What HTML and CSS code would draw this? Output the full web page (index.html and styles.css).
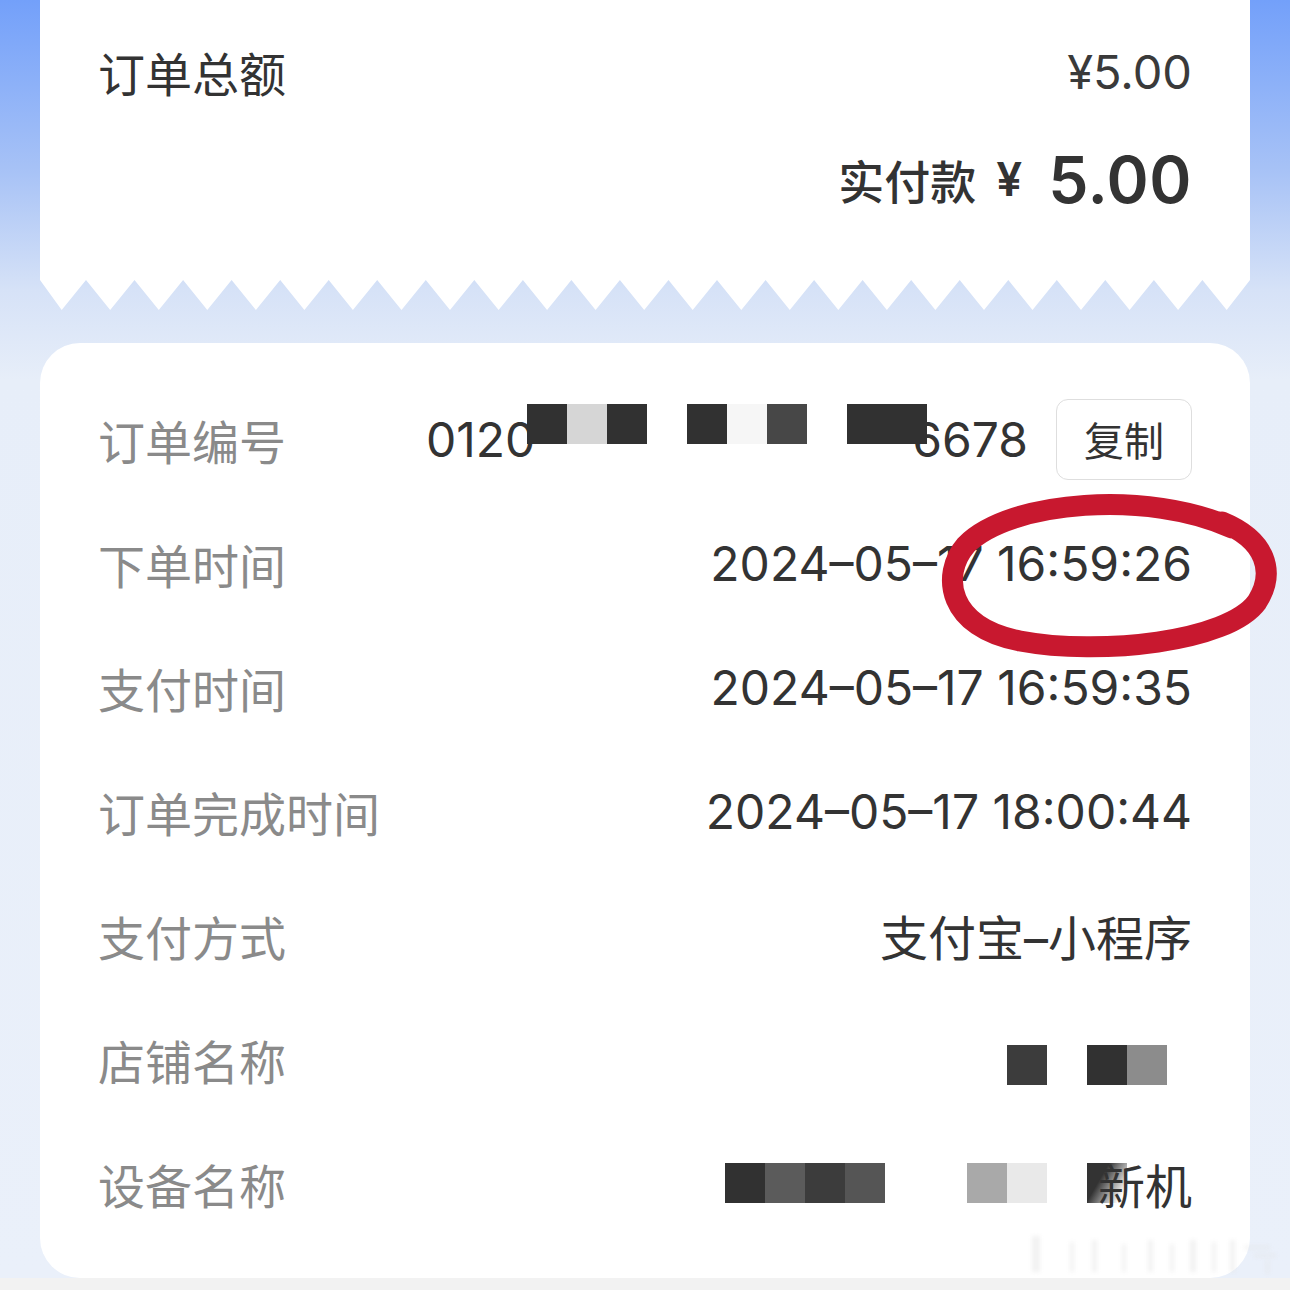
FILE: index.html
```html
<!DOCTYPE html>
<html lang="zh-CN">
<head>
  <meta charset="UTF-8" />
  <meta name="viewport" content="width=device-width, initial-scale=1.0"/>
  <title>订单详情</title>
  <link rel="stylesheet" href="styles.css">
</head>
<body>
  <div class="page">
    <div class="bill">
      <div class="bill-body">
        <div class="bill-row">
          <span class="bill-title">订单总额</span>
          <span class="bill-total">¥5.00</span>
        </div>
        <div class="bill-paid">
          <span class="paid-label">实付款</span>
          <span class="paid-yen">¥</span>
          <span class="paid-num">5.00</span>
        </div>
      </div>
      <svg class="teeth" viewBox="0 0 1210 30" preserveAspectRatio="none">
        <polygon fill="#fff" points="0,0 21.7,30 46,0 70.2,30 94.5,0 118.8,30 143.1,0 167.3,30 191.6,0 215.9,30 240.2,0 264.4,30 288.7,0 312.9,30 337.2,0 361.5,30 385.8,0 410,30 434.3,0 458.6,30 482.9,0 507.1,30 531.4,0 555.6,30 579.9,0 604.2,30 628.5,0 652.7,30 677,0 701.3,30 725.6,0 749.8,30 774.1,0 798.3,30 822.6,0 846.9,30 871.2,0 895.4,30 919.7,0 944,30 968.3,0 992.5,30 1016.8,0 1041,30 1065.3,0 1089.6,30 1113.9,0 1138.1,30 1162.4,0 1186.7,30 1210,0"/>
      </svg>
    </div>

    <div class="info">
      <div class="info-row">
        <span class="label">订单编号</span>
        <div class="value order-no">
          <span>0120</span>
          <span class="mosaic mosaic-order">
            <i class="px d1"></i><i class="px l1"></i><i class="px d1"></i>
            <i class="gap"></i>
            <i class="px d1"></i><i class="px l2"></i><i class="px d2"></i>
            <i class="gap"></i>
            <i class="px d1"></i><i class="px d1"></i>
          </span>
          <span class="tail">6678</span>
          <button class="copy">复制</button>
        </div>
      </div>
      <div class="info-row">
        <span class="label">下单时间</span>
        <span class="value">2024–05–17 16:59:26</span>
      </div>
      <div class="info-row">
        <span class="label">支付时间</span>
        <span class="value">2024–05–17 16:59:35</span>
      </div>
      <div class="info-row">
        <span class="label">订单完成时间</span>
        <span class="value">2024–05–17 18:00:44</span>
      </div>
      <div class="info-row">
        <span class="label">支付方式</span>
        <span class="value">支付宝–小程序</span>
      </div>
      <div class="info-row">
        <span class="label">店铺名称</span>
        <div class="value shop">
          <span class="mosaic">
            <i class="px d3"></i><i class="gap"></i><i class="px d1"></i><i class="px m1"></i>
          </span>
        </div>
      </div>
      <div class="info-row">
        <span class="label">设备名称</span>
        <div class="value device">
          <span class="mosaic">
            <i class="px d1"></i><i class="px m2"></i><i class="px d3"></i><i class="px m3"></i>
            <i class="gap wide"></i>
            <i class="px l3"></i><i class="px l4"></i>
            <i class="gap"></i>
            <i class="px fade"></i>
          </span>
          <span class="dev-name">新机</span>
        </div>
      </div>
    </div>

    <svg class="circle" width="1290" height="1290" viewBox="0 0 1290 1290">
      <path d="M1232 528 C1150 490 1010 500 966 545 C940 575 948 628 1020 641 C1100 656 1228 642 1257 602 C1276 572 1266 540 1222 522" fill="none" stroke="#c8182f" stroke-width="21" stroke-linecap="round"/>
    </svg>

    <svg class="mark" width="250" height="50" viewBox="0 0 250 50">
      <g fill="#e2e2e2" opacity="0.45">
        <rect x="2" y="6" width="8" height="36"/>
        <rect x="40" y="12" width="4" height="30"/>
        <rect x="62" y="10" width="5" height="32"/>
        <rect x="92" y="14" width="4" height="28"/>
        <rect x="118" y="10" width="5" height="32"/>
        <rect x="140" y="14" width="4" height="28"/>
        <rect x="160" y="10" width="6" height="32"/>
        <rect x="182" y="12" width="4" height="30"/>
        <rect x="200" y="10" width="5" height="32"/>
        <rect x="214" y="16" width="26" height="3"/>
        <rect x="224" y="24" width="22" height="3"/>
        <rect x="236" y="30" width="3" height="14"/>
      </g>
    </svg>
  </div>
  <div class="strip"></div>
</body>
</html>
```

FILE: styles.css
```css
body { margin: 0; font-family: "Inter", "Liberation Sans", "Noto Sans CJK SC", sans-serif; color: #333; }
.page { position: relative; width: 1290px; height: 1278px; padding: 0 40px; box-sizing: border-box; overflow: hidden;
  background: linear-gradient(to bottom, #73a0fa 0, #a7c2f6 170px, #d6e2f7 290px, #e7eef9 380px, #eaf0fa 100%); }
.strip { width: 1290px; height: 12px; background: #f2f2f2; }

.bill-body { background: #fff; height: 280px; padding: 43px 58px 0; box-sizing: border-box; }
.teeth { display: block; width: 1210px; height: 30px; }
.bill-row { display: flex; justify-content: space-between; align-items: center; height: 56px; }
.bill-title { font-family: "Noto Sans CJK SC", sans-serif; font-size: 47px; color: #333; }
.bill-total { font-size: 47px; color: #3a3a3a; }
.bill-paid { display: flex; justify-content: flex-end; align-items: center; height: 80px; margin-top: 40px; }
.paid-label { font-family: "Noto Sans CJK SC", sans-serif; font-size: 46px; font-weight: 500; color: #333; }
.paid-yen { font-size: 46px; font-weight: 600; margin-left: 20px; }
.paid-num { font-size: 64px; font-weight: 600; margin-left: 26px; letter-spacing: 0.5px; }

.info { background: #fff; margin-top: 33px; border-radius: 40px; padding: 34px 58px 33px; height: 935px; box-sizing: border-box; }
.info-row { display: flex; justify-content: space-between; align-items: center; height: 124px; }
.label { font-family: "Noto Sans CJK SC", sans-serif; font-size: 47px; color: #8a8a8a; }
.value { font-size: 48px; color: #333; white-space: nowrap; }

.order-no { display: flex; align-items: center; }
.mosaic { display: inline-flex; }
.mosaic .px { display: block; width: 40px; height: 40px; }
.mosaic .gap { display: block; width: 40px; height: 40px; }
.mosaic .gap.wide { width: 82px; }
.mosaic-order { margin: 0 -15px 30px -8px; position: relative; }
.d1 { background: #313131; }
.d2 { background: #474747; }
.d3 { background: #3c3c3c; }
.m1 { background: #8c8c8c; }
.m2 { background: #5b5b5b; }
.m3 { background: #555; }
.l1 { background: #d6d6d6; }
.l2 { background: #f6f6f6; }
.l3 { background: #a9a9a9; }
.l4 { background: #e9e9e9; }
.fade { background: linear-gradient(120deg, #333 35%, rgba(51,51,51,0) 85%); }

.copy { margin-left: 28px; width: 136px; height: 81px; border: 1.5px solid #dedede; border-radius: 12px; background: #fff;
  font-family: "Noto Sans CJK SC", sans-serif; font-size: 40px; color: #333; padding: 0; }

.shop { display: flex; margin-right: 25px; margin-top: 12px; }
.device { display: flex; align-items: center; }
.dev-name { font-family: "Noto Sans CJK SC", sans-serif; font-size: 47px; margin-left: -29px; }

.circle { position: absolute; left: 0; top: 0; pointer-events: none; }
.mark { position: absolute; left: 1030px; top: 1230px; filter: blur(2px); }
```
